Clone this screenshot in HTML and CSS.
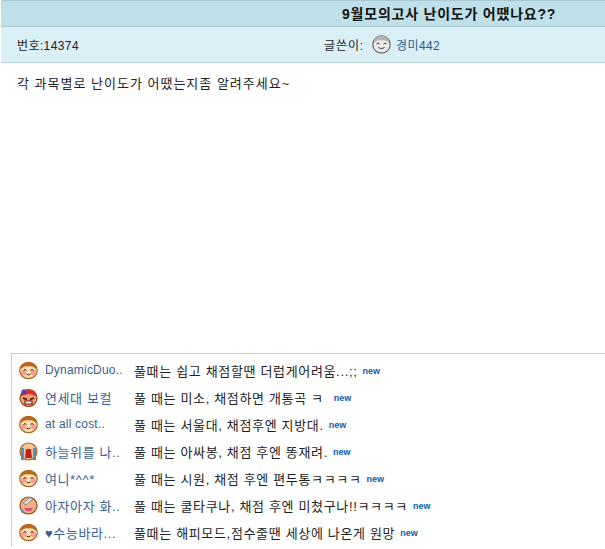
FILE: index.html
```html
<!DOCTYPE html>
<html lang="ko">
<head>
<meta charset="utf-8">
<title>9월모의고사 난이도가 어땠나요??</title>
<link rel="stylesheet" href="styles.css">
</head>
<body>
<svg class="defs" width="0" height="0" aria-hidden="true">
  <defs>
    <g id="face">
      <ellipse cx="9.5" cy="9.5" rx="8.8" ry="8.2" fill="#fde0ae" stroke="#a9611c" stroke-width="1.2"/>
      <path d="M1.5 8.5 C1.5 3.5 5 1.4 9.5 1.4 C14 1.4 17.5 3.5 17.5 8.5 C15 5.5 12 4.5 9.5 5.5 C7 4.5 4 5.5 1.5 8.5Z" fill="#b8691f"/>
      <circle cx="4.6" cy="11.6" r="2.7" fill="#fb9c9c"/>
      <circle cx="14.4" cy="11.6" r="2.7" fill="#fb9c9c"/>
      <path d="M4.5 9.5 L6 8.5 L7.5 9.5 M11.5 9.5 L13 8.5 L14.5 9.5" fill="none" stroke="#402010" stroke-width="1"/>
      <path d="M7.5 13 Q9.5 15 11.5 13" fill="none" stroke="#402010" stroke-width="1"/>
    </g>
  </defs>
</svg>
<header class="topic">
  <div class="title-bar"><h1 class="title">9월모의고사 난이도가 어땠나요??</h1></div>
  <div class="info-bar">
    <span class="number">번호:14374</span>
    <span class="writer"><span class="label">글쓴이:</span>
      <svg class="ava" viewBox="0 0 19 19">
        <circle cx="9.5" cy="9.5" r="8.7" fill="#ececec" stroke="#666" stroke-width="1.2"/>
        <path d="M2 8 C2 3 5 1 9.5 1 C14 1 17 3 17 8 C14 5 12 5 9.5 5.5 C7 5 5 5 2 8Z" fill="#b5b5b5"/>
        <path d="M4.5 9 L6 8 L7.5 9 M11.5 9 L13 8 L14.5 9" fill="none" stroke="#333" stroke-width="1"/>
        <path d="M6.5 12.5 Q9.5 15 12.5 12.5" fill="none" stroke="#333" stroke-width="1"/>
      </svg>
      <a class="link">경미442</a></span>
  </div>
</header>
<main class="content">각 과목별로 난이도가 어땠는지좀 알려주세요~</main>
<ul class="comments">
  <li class="row"><svg class="ava" viewBox="0 0 19 19"><use href="#face"/></svg><span class="name">DynamicDuo..</span><span class="text">풀때는 쉽고 채점할땐 더럽게어려움...;;</span><span class="new">new</span></li>
  <li class="row"><svg class="ava" viewBox="0 0 19 19">
      <circle cx="9.5" cy="10" r="8.5" fill="#f2a070" stroke="#8a4a20" stroke-width="1.2"/>
      <path d="M2 8 C3 3 6 1.5 10 1.5 C14 1.5 17 4 17.5 8 L10 6Z" fill="#e03030"/>
      <path d="M4 10 L8 11.5 M15 10 L11 11.5" stroke="#401010" stroke-width="1.4"/>
      <rect x="6" y="13" width="7" height="3" fill="#fff" stroke="#601010"/>
      <path d="M5 1 V7 M2 4 H8 M3 2 L7 6 M7 2 L3 6" stroke="#5a3fb0" stroke-width="1.2"/>
    </svg><span class="name ko">연세대 보컬</span><span class="text">풀 때는 미소, 채점하면 개통곡 ㅋ</span><span class="new wide">new</span></li>
  <li class="row"><svg class="ava" viewBox="0 0 19 19"><use href="#face"/></svg><span class="name">at all cost..</span><span class="text">풀 때는 서울대, 채점후엔 지방대.</span><span class="new">new</span></li>
  <li class="row"><svg class="ava" viewBox="0 0 19 19">
      <circle cx="9.5" cy="9.5" r="8.5" fill="#f8c890" stroke="#a86020" stroke-width="1.2"/>
      <rect x="2" y="6" width="3" height="12" fill="#4a90d0"/>
      <rect x="14" y="6" width="3" height="12" fill="#4a90d0"/>
      <path d="M7 7 H12 L13 16 H6Z" fill="#c02020"/>
    </svg><span class="name ko">하늘위를 나..</span><span class="text">풀 때는 아싸봉, 채점 후엔 똥재려.</span><span class="new">new</span></li>
  <li class="row"><svg class="ava" viewBox="0 0 19 19"><use href="#face"/></svg><span class="name ko">여니*^^*</span><span class="text">풀 때는 시원, 채점 후엔 편두통ㅋㅋㅋㅋ</span><span class="new">new</span></li>
  <li class="row"><svg class="ava" viewBox="0 0 19 19">
      <circle cx="9.5" cy="9.5" r="8.5" fill="#f5b080" stroke="#8a5020" stroke-width="1.2"/>
      <path d="M4 7 L11 1.5 L14 3 L7 9Z" fill="#ddd" stroke="#777" stroke-width=".8"/>
      <path d="M5 12 H14 L12 15 H7Z" fill="#e05070"/>
      <path d="M3.5 13 C2 15.5 2 17 3.5 17.5 C5 17 5 15.5 3.5 13Z" fill="#4a90d0"/>
    </svg><span class="name ko">아자아자 화..</span><span class="text">풀 때는 쿨타쿠나, 채점 후엔 미쳤구나!!ㅋㅋㅋㅋ</span><span class="new">new</span></li>
  <li class="row"><svg class="ava" viewBox="0 0 19 19"><use href="#face"/></svg><span class="name ko">♥수능바라...</span><span class="text">풀때는 해피모드,점수줄땐 세상에 나온게 원망</span><span class="new">new</span></li>
</ul>
</body>
</html>
```
FILE: styles.css
```css
html, body { margin: 0; padding: 0; background: #fff; }
body {
  width: 605px;
  height: 549px;
  overflow: hidden;
  font-family: "Liberation Sans", "Noto Sans CJK KR", sans-serif;
  font-size: 12px;
  color: #222;
}
.defs { position: absolute; }
.topic { margin-left: 1px; }
.title-bar {
  height: 25px;
  background: #c0e0e9;
  border-top: 1px solid #a8c8d2;
  border-bottom: 1px solid #a8c8d2;
  display: flex;
  align-items: center;
  padding-left: 340px;
}
.title {
  margin: 0 0 0 1px;
  font-size: 14px;
  font-weight: 700;
  line-height: 24px;
  letter-spacing: .78px;
  color: #111;
}
.info-bar {
  height: 35px;
  background: #daeff6;
  border-bottom: 1px solid #b5cdd4;
  display: flex;
  align-items: center;
  padding-left: 16px;
}
.number { width: 307px; letter-spacing: .4px; }
.writer { display: flex; align-items: center; }
.label { width: 48px; letter-spacing: .9px; }
.link { color: #2a5a90; margin-left: 5px; letter-spacing: .4px; }
.ava { width: 19px; height: 19px; flex: none; }
.content {
  height: 290px;
  box-sizing: border-box;
  padding: 11px 0 0 17px;
  font-size: 13px;
  line-height: 20px;
  letter-spacing: 1px;
}
.comments {
  list-style: none;
  margin: 0 0 0 11px;
  padding: 3px 0 0 7px;
  border-top: 1px solid #ccc;
  border-left: 1px solid #ccc;
}
.row { height: 27px; display: flex; align-items: center; font-size: 12px; }
.name { width: 89px; margin-left: 7px; padding-bottom: 1px; color: #3a6090; flex: none; white-space: nowrap; letter-spacing: .2px; }
.name.ko { font-size: 13px; letter-spacing: .6px; }
.text { color: #222; white-space: nowrap; padding-bottom: 1px; font-size: 13px; letter-spacing: .66px; }
.new { margin-left: 5px; font-size: 9px; font-weight: 700; color: #0a5ea8; line-height: 10px; }
.new.wide { margin-left: 10px; }
```
